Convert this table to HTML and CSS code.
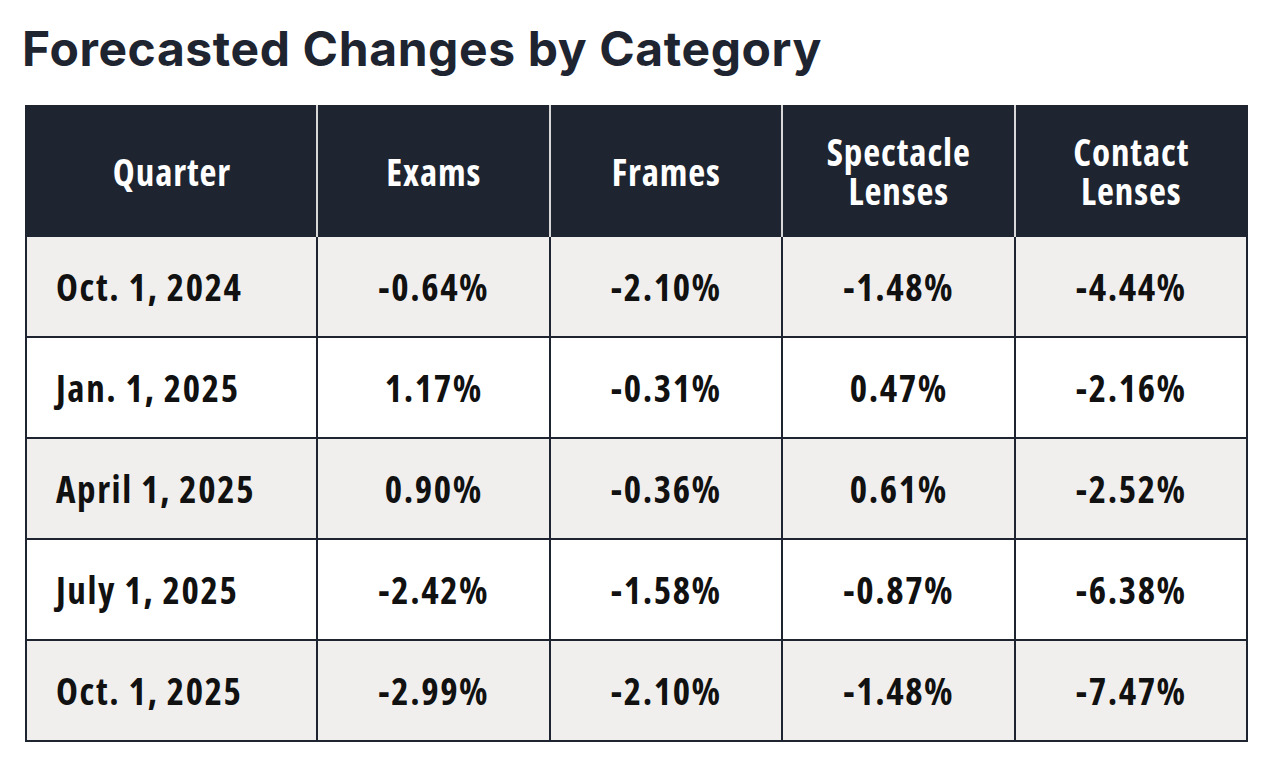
FILE: index.html
```html
<!DOCTYPE html>
<html>
<head>
<meta charset="utf-8">
<link rel="stylesheet" href="styles.css">
</head>
<body>
<div class="page">
  <h1 class="title">Forecasted Changes by Category</h1>
  <table class="grid">
    <thead>
      <tr>
        <th class="c1">Quarter</th>
        <th>Exams</th>
        <th>Frames</th>
        <th><span class="ln">Spectacle</span><span class="ln">Lenses</span></th>
        <th><span class="ln">Contact</span><span class="ln">Lenses</span></th>
      </tr>
    </thead>
    <tbody>
      <tr class="alt"><td class="q">Oct. 1, 2024</td><td>-0.64%</td><td>-2.10%</td><td>-1.48%</td><td>-4.44%</td></tr>
      <tr><td class="q">Jan. 1, 2025</td><td>1.17%</td><td>-0.31%</td><td>0.47%</td><td>-2.16%</td></tr>
      <tr class="alt"><td class="q">April 1, 2025</td><td>0.90%</td><td>-0.36%</td><td>0.61%</td><td>-2.52%</td></tr>
      <tr><td class="q">July 1, 2025</td><td>-2.42%</td><td>-1.58%</td><td>-0.87%</td><td>-6.38%</td></tr>
      <tr class="alt"><td class="q">Oct. 1, 2025</td><td>-2.99%</td><td>-2.10%</td><td>-1.48%</td><td>-7.47%</td></tr>
    </tbody>
  </table>
</div>
</body>
</html>
```
FILE: styles.css
```css
html, body {
  margin: 0;
  padding: 0;
  background: #ffffff;
}
.page {
  padding: 19px 0 0 25px;
}
.title {
  margin: 0 0 26px -3px;
  font-family: Inter, Lato, "Noto Sans", sans-serif;
  font-weight: 700;
  font-size: 48px;
  line-height: 60px;
  color: #1e2530;
  letter-spacing: 0.6px;
}
.grid {
  border-collapse: collapse;
  table-layout: fixed;
  width: 1223px;
  border: 2px solid #1e2530;
  font-family: "Open Sans", "DejaVu Sans Condensed", sans-serif;
  font-stretch: 75%;
  font-weight: 700;
  font-size: 37px;
  color: #111111;
}
.grid th {
  background: #1e2530;
  color: #ffffff;
  height: 128px;
  line-height: 39px;
  font-weight: 700;
  letter-spacing: 0.9px;
  border-left: 2px solid #d8d8d8;
  padding: 0 0 0 1px;
  text-align: center;
}
.grid th .ln {
  display: block;
  height: 39px;
}
.grid th.c1 {
  width: 288px;
  border-left: none;
}
.grid td {
  height: 99px;
  padding: 0 0 0 1px;
  text-align: center;
  letter-spacing: 1.6px;
  border: 2px solid #1e2530;
}
.grid td.q {
  text-align: left;
  padding-left: 29px;
}
.grid tr.alt td {
  background: #f0efee;
}
```
